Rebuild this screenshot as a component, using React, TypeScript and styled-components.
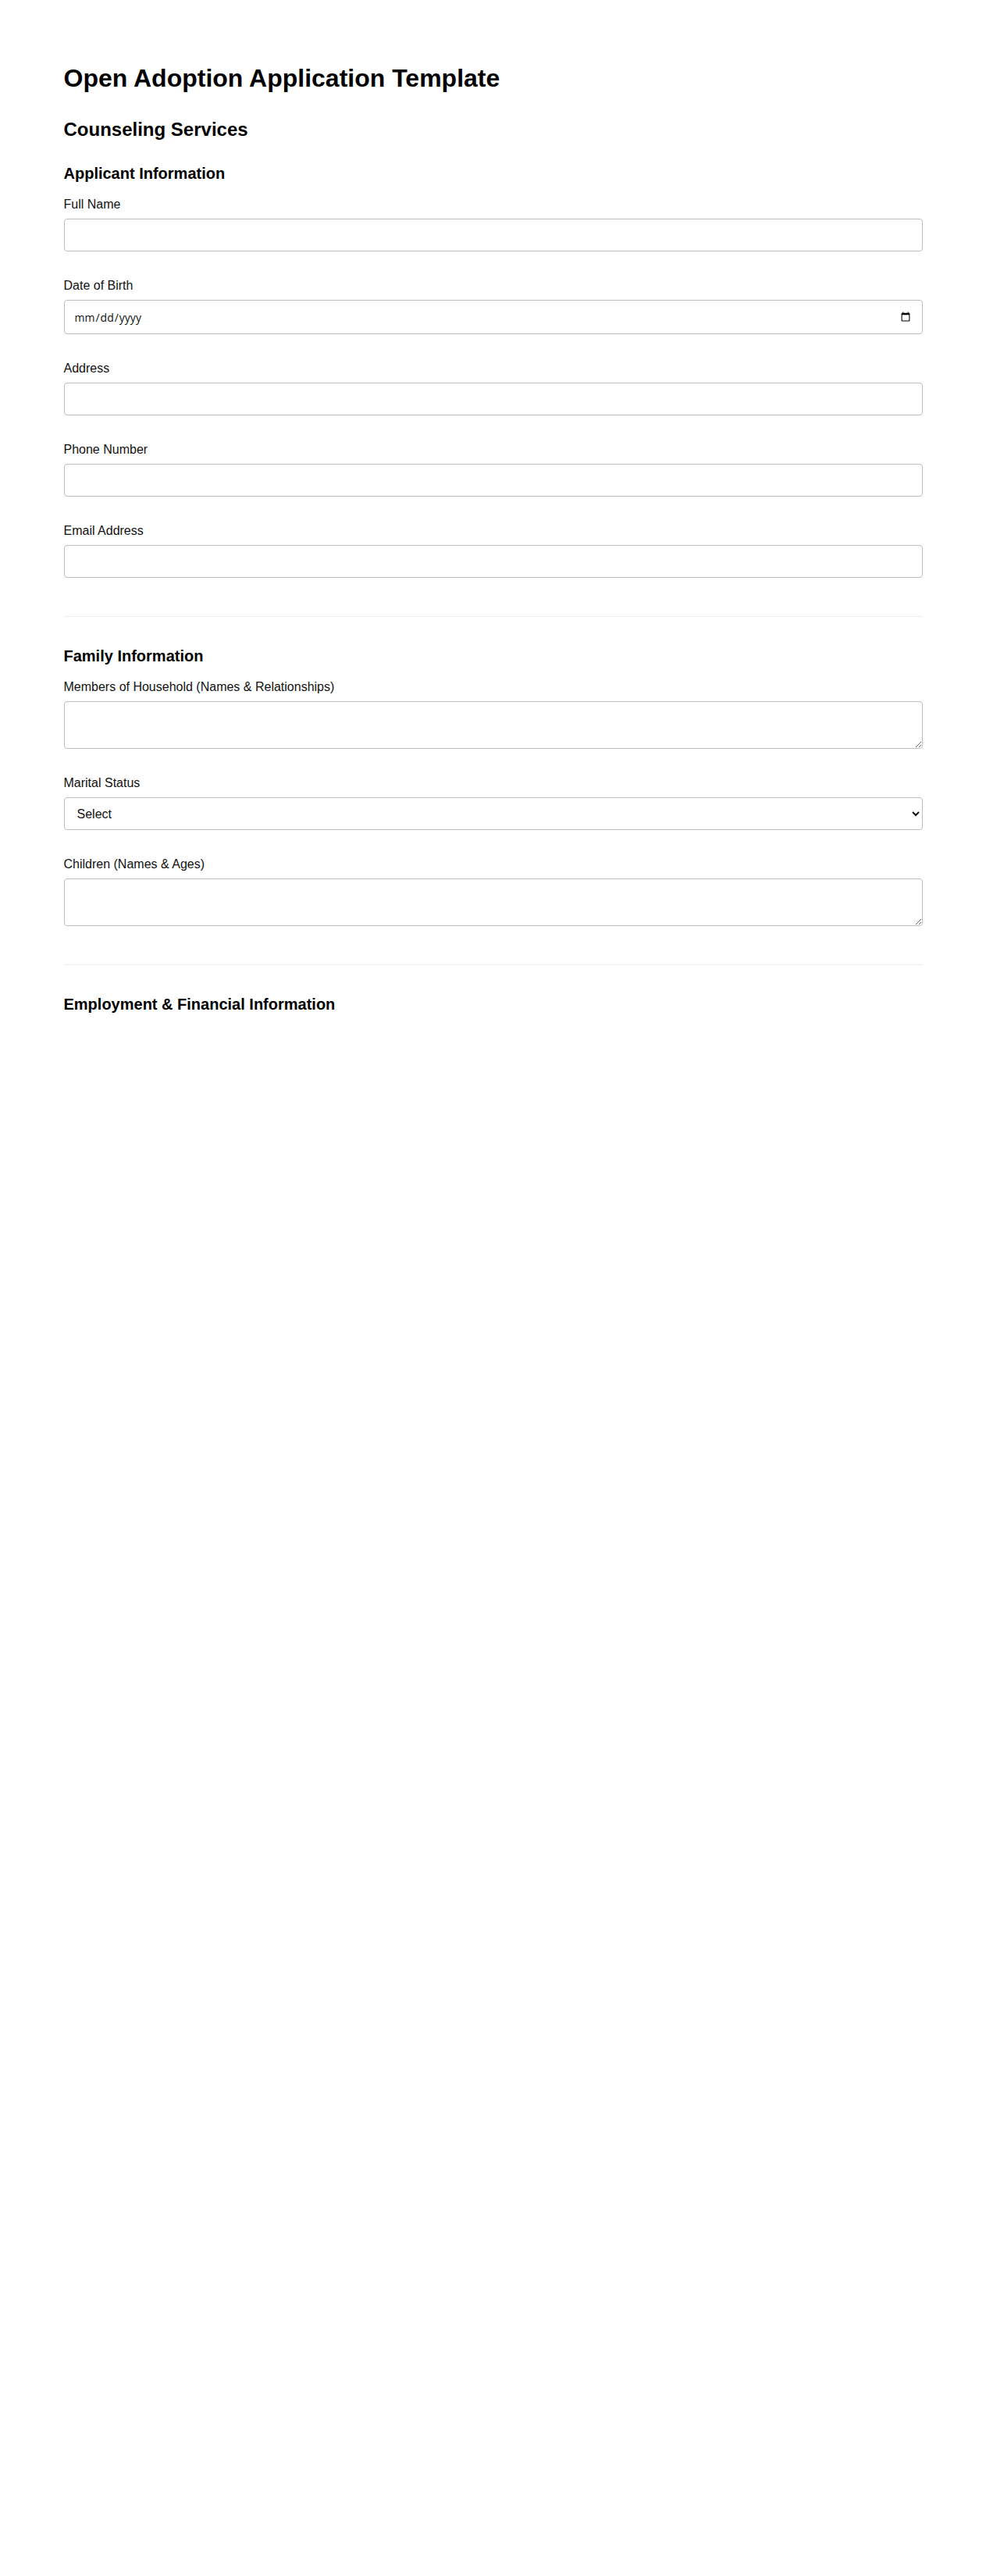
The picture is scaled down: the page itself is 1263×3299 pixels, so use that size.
import React from 'react';
import styled, { createGlobalStyle } from 'styled-components';

const GlobalStyle = createGlobalStyle`
  body {
    margin: 0;
    background: #fff;
    font-family: "Liberation Sans", Arial, sans-serif;
    color: #111;
  }
`;

const applicantFields = [
  { id: 'fullName', label: 'Full Name', type: 'text' },
  { id: 'dob', label: 'Date of Birth', type: 'date' },
  { id: 'address', label: 'Address', type: 'text' },
  { id: 'phone', label: 'Phone Number', type: 'tel' },
  { id: 'email', label: 'Email Address', type: 'email' },
];

const App = () => {
  return (
    <>
      <GlobalStyle />
      <Page>
        <Title>Open Adoption Application Template</Title>
        <Subtitle>Counseling Services</Subtitle>

        <Section>
          <SectionTitle>Applicant Information</SectionTitle>
          {applicantFields.map((f) => (
            <Field key={f.id}>
              <Label htmlFor={f.id}>{f.label}</Label>
              <Input id={f.id} type={f.type} />
            </Field>
          ))}
        </Section>

        <Section>
          <SectionTitle>Family Information</SectionTitle>
          <Field>
            <Label htmlFor="household">Members of Household (Names &amp; Relationships)</Label>
            <TextArea id="household" />
          </Field>
          <Field>
            <Label htmlFor="marital">Marital Status</Label>
            <Select id="marital" defaultValue="">
              <option value="">Select</option>
              <option value="single">Single</option>
              <option value="married">Married</option>
              <option value="divorced">Divorced</option>
              <option value="widowed">Widowed</option>
            </Select>
          </Field>
          <Field>
            <Label htmlFor="children">Children (Names &amp; Ages)</Label>
            <TextArea id="children" />
          </Field>
        </Section>

        <Section $last>
          <SectionTitle>Employment &amp; Financial Information</SectionTitle>
        </Section>
      </Page>
    </>
  );
};

const Page = styled.main`
  max-width: 1100px;
  margin: 0 auto;
  padding: 82px 0 120px;
`;

const Title = styled.h1`
  margin: 0 0 33px;
  font-size: 32px;
  line-height: 37px;
  font-weight: 700;
  color: #000;
`;

const Subtitle = styled.h2`
  margin: 0 0 31px;
  font-size: 24px;
  line-height: 28px;
  font-weight: 700;
  color: #000;
`;

const Section = styled.section<{ $last?: boolean }>`
  padding-bottom: ${(p) => (p.$last ? '0' : '14px')};
  margin-bottom: ${(p) => (p.$last ? '0' : '39px')};
  border-bottom: ${(p) => (p.$last ? 'none' : '1px solid #ececec')};
`;

const SectionTitle = styled.h3`
  margin: 0 0 19px;
  font-size: 20px;
  line-height: 23px;
  font-weight: 700;
  color: #000;
`;

const Field = styled.div`
  margin-bottom: 35px;
`;

const Label = styled.label`
  display: block;
  margin-bottom: 9px;
  font-size: 16px;
  line-height: 18px;
  color: #111;
`;

const Input = styled.input`
  display: block;
  box-sizing: border-box;
  width: 100%;
  height: 42px;
  padding: 0 12px;
  font-family: "Liberation Sans", Arial, sans-serif;
  font-size: 14px;
  color: #111;
  background: #fff;
  border: 1px solid #bdbdbd;
  border-radius: 4px;

  &[type='date'] {
    height: 44px;
    font-family: "Open Sans", "Noto Sans", sans-serif;
  }
`;

const Select = styled.select`
  display: block;
  box-sizing: border-box;
  width: 100%;
  height: 42px;
  padding: 0 8px 0 12px;
  font-family: "Liberation Sans", Arial, sans-serif;
  font-size: 16px;
  color: #111;
  background: #fff;
  border: 1px solid #bdbdbd;
  border-radius: 4px;
`;

const TextArea = styled.textarea`
  display: block;
  box-sizing: border-box;
  width: 100%;
  height: 61px;
  padding: 12px;
  font-family: "Liberation Sans", Arial, sans-serif;
  font-size: 14px;
  color: #111;
  background: #fff;
  border: 1px solid #bdbdbd;
  border-radius: 4px;
`;

export default App;
